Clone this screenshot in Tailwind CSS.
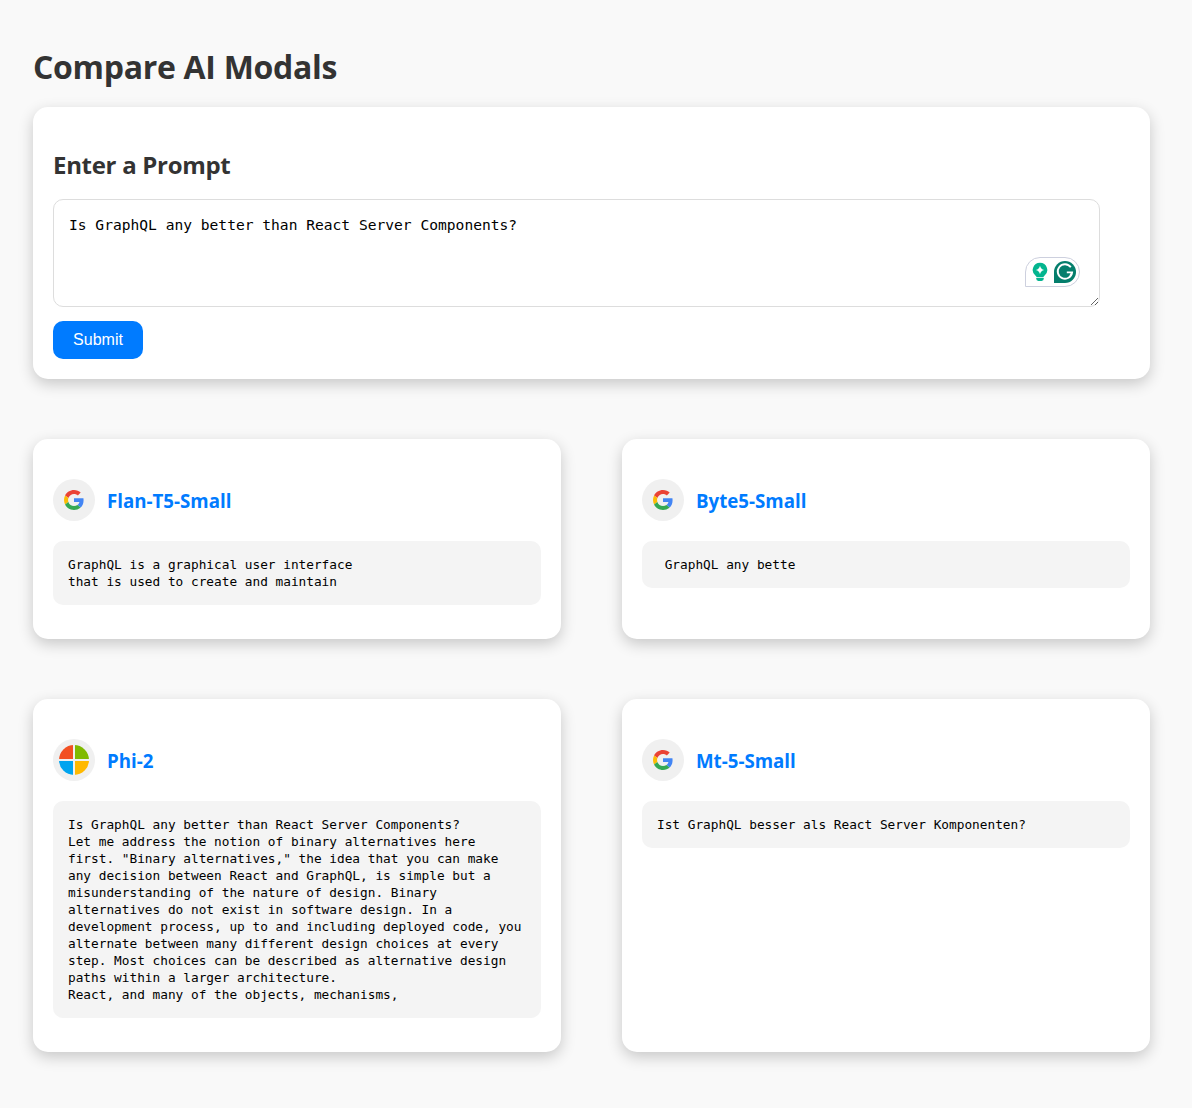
<!DOCTYPE html>
<html lang="en">
<head>
<meta charset="utf-8">
<title>Compare AI Modals</title>
<script src="https://cdn.jsdelivr.net/npm/@tailwindcss/browser@4"></script>
</head>
<body class="min-h-screen bg-[#f9f9f9] pl-[33px] pr-[42px] pt-[45px] font-['Open_Sans',sans-serif] text-black">
<svg class="hidden">
  <symbol id="google" viewBox="0 0 48 48">
    <path fill="#EA4335" d="M24 9.5c3.54 0 6.71 1.22 9.21 3.6l6.85-6.85C35.9 2.38 30.47 0 24 0 14.62 0 6.51 5.38 2.56 13.22l7.98 6.19C12.43 13.72 17.74 9.5 24 9.5z"/>
    <path fill="#4285F4" d="M46.98 24.55c0-1.57-.15-3.09-.38-4.55H24v9.02h12.94c-.58 2.96-2.26 5.48-4.78 7.18l7.73 6c4.51-4.18 7.09-10.36 7.09-17.65z"/>
    <path fill="#FBBC05" d="M10.53 28.59c-.48-1.45-.76-2.99-.76-4.59s.27-3.14.76-4.59l-7.98-6.19C.92 16.46 0 20.12 0 24s.92 7.54 2.56 10.78l7.97-6.19z"/>
    <path fill="#34A853" d="M24 48c6.48 0 11.93-2.13 15.89-5.81l-7.73-6c-2.15 1.45-4.92 2.3-8.16 2.3-6.26 0-11.57-4.22-13.47-9.91l-7.98 6.19C6.51 42.62 14.62 48 24 48z"/>
  </symbol>
</svg>
<h1 class="h-[62px] text-[32px] leading-[43px] font-bold tracking-[-0.3px] whitespace-nowrap text-[#333]">Compare AI Modals</h1>

<section class="h-[272px] rounded-[15px] bg-white px-5 pt-[42px] shadow-[0_5px_15px_rgba(0,0,0,0.2)]">
  <h2 class="h-[50px] text-[24px] leading-8 font-bold tracking-[-0.3px] whitespace-nowrap text-[#333]">Enter a Prompt</h2>
  <div class="relative h-[108px] w-[1047px]">
    <textarea spellcheck="false" class="block h-[108px] w-full resize rounded-[10px] border border-[#ddd] p-[15px] font-['DejaVu_Sans_Mono',monospace] text-[14.6px] leading-[19px] outline-none">Is GraphQL any better than React Server Components?</textarea>
    <div class="absolute top-[58px] left-[972px] flex h-[30px] w-[55px] items-center rounded-[15px] rounded-bl-none border border-[#cdd0de] bg-white">
      <svg class="ml-[6px] h-5 w-4" viewBox="0 0 16 20">
        <path fill="#03b58f" d="M8 .7a7.3 7.3 0 0 1 4.4 13.1q-.9.7-1 1.4H4.6q-.1-.7-1-1.4A7.3 7.3 0 0 1 8 .7zM4.2 16h7.6v.6q0 2.4-2.2 2.4H6.4q-2.2 0-2.2-2.4z"/>
        <path fill="#fff" d="M8 3.7q.7 3.5 4.2 4.3Q8.700 8.700 8 12.300 7.300 8.700 3.800 8 7.300 7.200 8 3.700z"/>
      </svg>
      <svg class="ml-[6px] h-[22px] w-[22px]" viewBox="0 0 22 22">
        <path fill="#047e6c" d="M11 0a11 11 0 1 1 0 22H0V11A11 11 0 0 1 11 0z"/>
        <path fill="none" stroke="#fff" stroke-width="1.900" d="M16.800 6.300A7.200 7.200 0 1 0 18.100 11.400H12.800M18.200 11.400l-2 3.600"/>
      </svg>
    </div>
  </div>
  <button class="mt-[14px] block h-[38px] w-[90px] rounded-[10px] bg-[#007bff] pb-px font-['Liberation_Sans',sans-serif] text-[16px] text-white">Submit</button>
</section>

<main class="mt-[60px] grid grid-cols-2 grid-rows-[200px_353px] gap-x-[61px] gap-y-[60px]">
  <article class="rounded-[15px] bg-white px-5 pt-10 shadow-[0_5px_15px_rgba(0,0,0,0.2)]">
    <header class="mb-5 flex h-[42px] items-center gap-3">
      <span class="flex size-[42px] items-center justify-center rounded-full bg-[#f0f0f0]"><svg class="size-5"><use href="#google"/></svg></span>
      <h3 class="text-[18.700px] leading-[25px] font-bold whitespace-nowrap text-[#007bff]">Flan-T5-Small</h3>
    </header>
    <pre class="rounded-[10px] bg-[#f4f4f4] p-[15px] font-['DejaVu_Sans_Mono',monospace] text-[12.780px] leading-[17px]">GraphQL is a graphical user interface
that is used to create and maintain</pre>
  </article>
  <article class="rounded-[15px] bg-white px-5 pt-10 shadow-[0_5px_15px_rgba(0,0,0,0.2)]">
    <header class="mb-5 flex h-[42px] items-center gap-3">
      <span class="flex size-[42px] items-center justify-center rounded-full bg-[#f0f0f0]"><svg class="size-5"><use href="#google"/></svg></span>
      <h3 class="text-[18.700px] leading-[25px] font-bold whitespace-nowrap text-[#007bff]">Byte5-Small</h3>
    </header>
    <pre class="rounded-[10px] bg-[#f4f4f4] p-[15px] font-['DejaVu_Sans_Mono',monospace] text-[12.780px] leading-[17px]"> GraphQL any bette</pre>
  </article>
  <article class="rounded-[15px] bg-white px-5 pt-10 shadow-[0_5px_15px_rgba(0,0,0,0.2)]">
    <header class="mb-5 flex h-[42px] items-center gap-3">
      <span class="flex size-[42px] items-center justify-center rounded-full bg-[#f0f0f0]">
        <span class="grid size-[30px] grid-cols-2 gap-[1.400px] overflow-hidden rounded-full">
          <i class="bg-[#f25022]"></i><i class="bg-[#7fba00]"></i><i class="bg-[#00a4ef]"></i><i class="bg-[#ffb900]"></i>
        </span>
      </span>
      <h3 class="text-[18.700px] leading-[25px] font-bold whitespace-nowrap text-[#007bff]">Phi-2</h3>
    </header>
    <pre class="rounded-[10px] bg-[#f4f4f4] p-[15px] font-['DejaVu_Sans_Mono',monospace] text-[12.780px] leading-[17px]">Is GraphQL any better than React Server Components?
Let me address the notion of binary alternatives here
first. "Binary alternatives," the idea that you can make
any decision between React and GraphQL, is simple but a
misunderstanding of the nature of design. Binary
alternatives do not exist in software design. In a
development process, up to and including deployed code, you
alternate between many different design choices at every
step. Most choices can be described as alternative design
paths within a larger architecture.
React, and many of the objects, mechanisms,</pre>
  </article>
  <article class="rounded-[15px] bg-white px-5 pt-10 shadow-[0_5px_15px_rgba(0,0,0,0.2)]">
    <header class="mb-5 flex h-[42px] items-center gap-3">
      <span class="flex size-[42px] items-center justify-center rounded-full bg-[#f0f0f0]"><svg class="size-5"><use href="#google"/></svg></span>
      <h3 class="text-[18.700px] leading-[25px] font-bold whitespace-nowrap text-[#007bff]">Mt-5-Small</h3>
    </header>
    <pre class="rounded-[10px] bg-[#f4f4f4] p-[15px] font-['DejaVu_Sans_Mono',monospace] text-[12.780px] leading-[17px]">Ist GraphQL besser als React Server Komponenten?</pre>
  </article>
</main>
</body>
</html>
